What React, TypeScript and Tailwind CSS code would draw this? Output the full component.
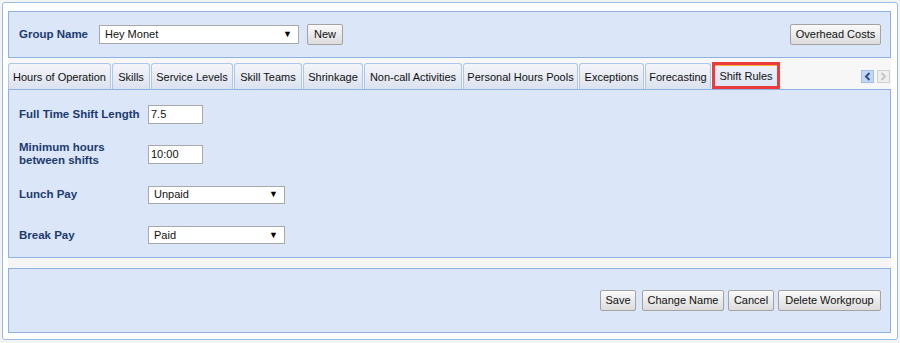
import React from "react";

const font = { fontFamily: '"Liberation Sans", Arial, sans-serif' };

function Btn({ w, children, className = "" }: { w: string; children: React.ReactNode; className?: string }) {
  return (
    <div
      className={`${w} ${className} h-[21px] flex items-center justify-center border border-[#a3a3a3] rounded-[2px] bg-gradient-to-b from-[#fafafa] to-[#dcdcdc] text-[11px] text-[#111] shrink-0`}
    >
      {children}
    </div>
  );
}

function Select({ w, h, value }: { w: string; h: string; value: string }) {
  return (
    <div className={`${w} ${h} flex items-center justify-between border border-[#a9a9a9] bg-white pl-[5px] pr-[6px] text-[11px] text-[#111] shrink-0`}>
      <span>{value}</span>
      <span className="text-[9px] leading-none text-black">▼</span>
    </div>
  );
}

function Input({ value }: { value: string }) {
  return (
    <div className="w-[55px] h-[19px] flex items-center border border-[#a9a9a9] bg-white pl-[2px] text-[11px] text-[#111] shrink-0">
      {value}
    </div>
  );
}

const tabs: { label: string; w: string }[] = [
  { label: "Hours of Operation", w: "w-[103px]" },
  { label: "Skills", w: "w-[38px]" },
  { label: "Service Levels", w: "w-[82px]" },
  { label: "Skill Teams", w: "w-[68px]" },
  { label: "Shrinkage", w: "w-[60px]" },
  { label: "Non-call Activities", w: "w-[98px]" },
  { label: "Personal Hours Pools", w: "w-[115px]" },
  { label: "Exceptions", w: "w-[65px]" },
  { label: "Forecasting", w: "w-[66px]" },
];

function Label({ children }: { children: React.ReactNode }) {
  return <div className="w-[129px] shrink-0 text-[11.5px] font-bold leading-[13px] text-[#1b3b6f]">{children}</div>;
}

export default function App() {
  return (
    <div style={font} className="w-[900px] h-[343px] bg-[#f3f3f3] pt-[2px] pl-[2px]">
      <div className="w-[896px] h-[338px] border border-[#99bbe8] rounded-[3px] bg-white pt-[8px] pb-[6px] pl-[5px] pr-[6px] flex flex-col">
        {/* Top panel */}
        <div className="h-[47px] border border-[#8db2e3] bg-[#dbe6f8] flex items-center pl-[10px] pr-[9px]">
          <div className="w-[80px] text-[11.5px] font-bold text-[#1b3b6f]">Group Name</div>
          <Select w="w-[200px]" h="h-[19px]" value="Hey Monet" />
          <Btn w="w-[36px]" className="ml-[8px]">New</Btn>
          <Btn w="w-[91px]" className="ml-auto">Overhead Costs</Btn>
        </div>

        {/* Tab strip */}
        <div className="h-[31px] bg-[#f7f7f7] flex items-end gap-[1px] pr-[1px]">
          {tabs.map((t) => (
            <div
              key={t.label}
              className={`${t.w} h-[26px] shrink-0 rounded-t-[3px] border border-b-0 border-[#aec6ea] bg-gradient-to-b from-[#f4f5f9] to-[#dbe2ef] flex items-center justify-center pt-[1px] text-[11px] text-[#111] whitespace-nowrap`}
            >
              {t.label}
            </div>
          ))}
          <div className="w-[68px] h-[27px] shrink-0 border-[3px] border-[#ec3b3d] bg-gradient-to-b from-[#eef2fa] to-[#dde6f6] flex flex-col">
            <div className="h-[1px] bg-[#f3b54a]" />
            <div className="flex-1 flex items-center justify-center text-[11px] text-[#111] whitespace-nowrap">Shift Rules</div>
          </div>
          <div className="ml-auto mb-[6px] flex gap-[3px]">
            <div className="w-[13px] h-[13px] border border-[#a3bfe9] bg-[#c3d6f6] flex items-center justify-center">
              <svg width="7" height="9" viewBox="0 0 7 9">
                <path d="M5.5 1 L2 4.5 L5.5 8" stroke="#2b4f86" strokeWidth="2" fill="none" />
              </svg>
            </div>
            <div className="w-[13px] h-[13px] border border-[#d0d0d0] bg-[#efefef] flex items-center justify-center">
              <svg width="7" height="9" viewBox="0 0 7 9">
                <path d="M1.5 1 L5 4.5 L1.5 8" stroke="#c4c4c4" strokeWidth="2" fill="none" />
              </svg>
            </div>
          </div>
        </div>

        {/* Content panel */}
        <div className="h-[169px] border border-[#8db2e3] bg-[#dbe6f8] pt-[4px] pl-[10px] flex flex-col">
          <div className="h-[40px] flex items-center">
            <Label>Full Time Shift Length</Label>
            <Input value="7.5" />
          </div>
          <div className="h-[40px] flex items-center">
            <Label>
              Minimum hours
              <br />
              between shifts
            </Label>
            <Input value="10:00" />
          </div>
          <div className="h-[41px] flex items-center">
            <Label>Lunch Pay</Label>
            <Select w="w-[137px]" h="h-[18px]" value="Unpaid" />
          </div>
          <div className="h-[40px] flex items-center">
            <Label>Break Pay</Label>
            <Select w="w-[137px]" h="h-[18px]" value="Paid" />
          </div>
        </div>

        <div className="h-[10px] bg-[#f5f5f5]" />

        {/* Bottom panel */}
        <div className="h-[65px] border border-[#8db2e3] bg-[#dbe6f8] flex items-center justify-end pr-[9px]">
          <Btn w="w-[36px]">Save</Btn>
          <Btn w="w-[82px]" className="ml-[6px]">Change Name</Btn>
          <Btn w="w-[46px]" className="ml-[4px]">Cancel</Btn>
          <Btn w="w-[103px]" className="ml-[4px]">Delete Workgroup</Btn>
        </div>
      </div>
    </div>
  );
}
